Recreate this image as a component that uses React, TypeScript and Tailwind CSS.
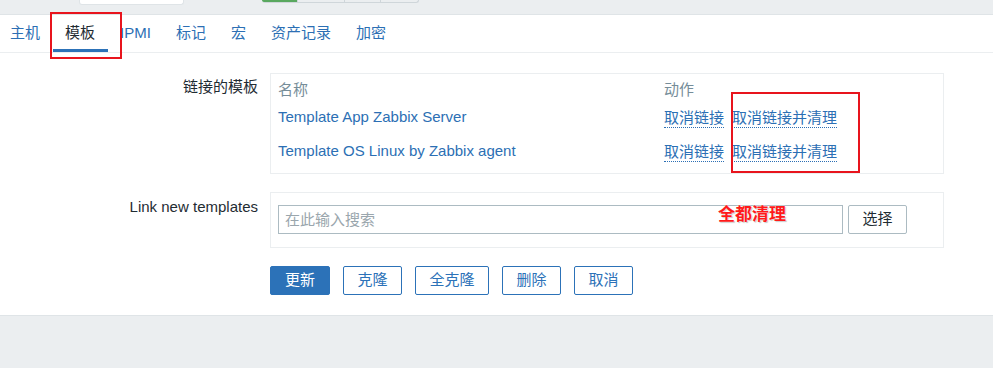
import React from 'react';

const font = { fontFamily: '"Liberation Sans", Arial, "Noto Sans CJK SC", sans-serif' };

const tabs = ['主机', '模板', 'IPMI', '标记', '宏', '资产记录', '加密'];

const templates = ['Template App Zabbix Server', 'Template OS Linux by Zabbix agent'];

const ActionLink = ({ children }: { children: React.ReactNode }) => (
  <span className="inline-block leading-[18px] border-b border-dotted border-[#2c6fb4] text-[#2c6fb4] cursor-pointer">
    {children}
  </span>
);

const App = () => {
  return (
    <div className="relative min-h-screen bg-[#ebeef0] text-[15px] text-[#1f2c33]" style={font}>
      {/* filter bar remains */}
      <div className="flex items-start h-[15px] border-b border-[#dfe4e7] pl-[79px]">
        <div className="w-[105px] h-[5px] bg-white border-x border-b border-[#dfe4e7] rounded-b-[3px]" />
        <div className="ml-[78px] flex h-[3px] w-[157px] rounded-b-[3px] overflow-hidden border-b border-r border-[#cfd6da]">
          <div className="w-[35px] bg-[#59a85f]" />
          <div className="w-[48px] border-l border-[#cfd6da]" />
          <div className="w-[36px] border-l border-[#cfd6da]" />
          <div className="w-[38px] border-l border-[#cfd6da]" />
        </div>
      </div>

      <div className="bg-white border-b border-[#dfe4e7]">
        {/* tabs */}
        <div className="flex h-[38px] border-b border-[#ebeef0] ml-[-2.5px]">
          {tabs.map((tab) => {
            const active = tab === '模板';
            return (
              <div
                key={tab}
                className={`flex items-center pt-[3px] px-[12.5px] border-b-[3px] ${
                  active ? 'border-[#2c72b8] text-[#1f2c33]' : 'border-transparent text-[#2c6fb4]'
                }`}
              >
                {tab}
              </div>
            );
          })}
        </div>

        {/* form */}
        <div className="pt-[20px] pb-[20px]">
          <div className="flex">
            <div className="w-[258px] text-right pt-[5px] leading-[18px]">链接的模板</div>
            <div className="ml-[12px] w-[674px] border border-[#ebeef0] pt-[6px] pb-[5px] pl-[7px]">
              <div className="flex h-[20px] items-center text-[#768d99]">
                <div className="w-[386px]">名称</div>
                <div>动作</div>
              </div>
              {templates.map((t) => (
                <div key={t} className="flex h-[34px] items-center pt-[1px]">
                  <div className="w-[386px] text-[#2c6fb4]">{t}</div>
                  <div className="flex gap-[8px] pt-[1px]">
                    <ActionLink>取消链接</ActionLink>
                    <ActionLink>取消链接并清理</ActionLink>
                  </div>
                </div>
              ))}
            </div>
          </div>

          <div className="flex mt-[18px]">
            <div className="w-[258px] text-right pt-[6px] leading-[18px]">Link new templates</div>
            <div className="ml-[12px] w-[674px] border border-[#ebeef0] pt-[12px] pb-[13px] pl-[7px] flex gap-[5px]">
              <input
                className="w-[565px] h-[29px] border border-[#acbbc2] px-[6px] text-[15px] outline-none placeholder:text-[#9aa6ad]"
                placeholder="在此输入搜索"
                style={font}
              />
              <button className="w-[59px] h-[29px] border border-[#acbbc2] rounded-[2px] bg-white text-[#1f2c33]">
                选择
              </button>
            </div>
          </div>

          <div className="flex gap-[13px] mt-[18px] ml-[270px]">
            <button className="h-[29px] px-[14px] rounded-[2px] bg-[#2c72b8] border border-[#2c72b8] text-white">更新</button>
            <button className="h-[29px] px-[13.5px] rounded-[2px] bg-white border border-[#2c72b8] text-[#2c72b8]">克隆</button>
            <button className="h-[29px] px-[13.5px] rounded-[2px] bg-white border border-[#2c72b8] text-[#2c72b8]">全克隆</button>
            <button className="h-[29px] px-[13.5px] rounded-[2px] bg-white border border-[#2c72b8] text-[#2c72b8]">删除</button>
            <button className="h-[29px] px-[13.5px] rounded-[2px] bg-white border border-[#2c72b8] text-[#2c72b8]">取消</button>
          </div>
        </div>
      </div>

      {/* annotations */}
      <div className="absolute left-[50px] top-[12px] w-[72px] h-[47px] border-2 border-[#e8141d]" />
      <div className="absolute left-[731px] top-[92px] w-[129px] h-[81px] border-2 border-[#e8141d]" />
      <div
        className="absolute left-[718px] top-[204px] text-[17px] font-bold leading-[22px] text-[#ff1a1a]"
        style={{ textShadow: '0 0 2px #fff, 1px 1px 1px #bbb' }}
      >
        全都清理
      </div>
    </div>
  );
};

export default App;
